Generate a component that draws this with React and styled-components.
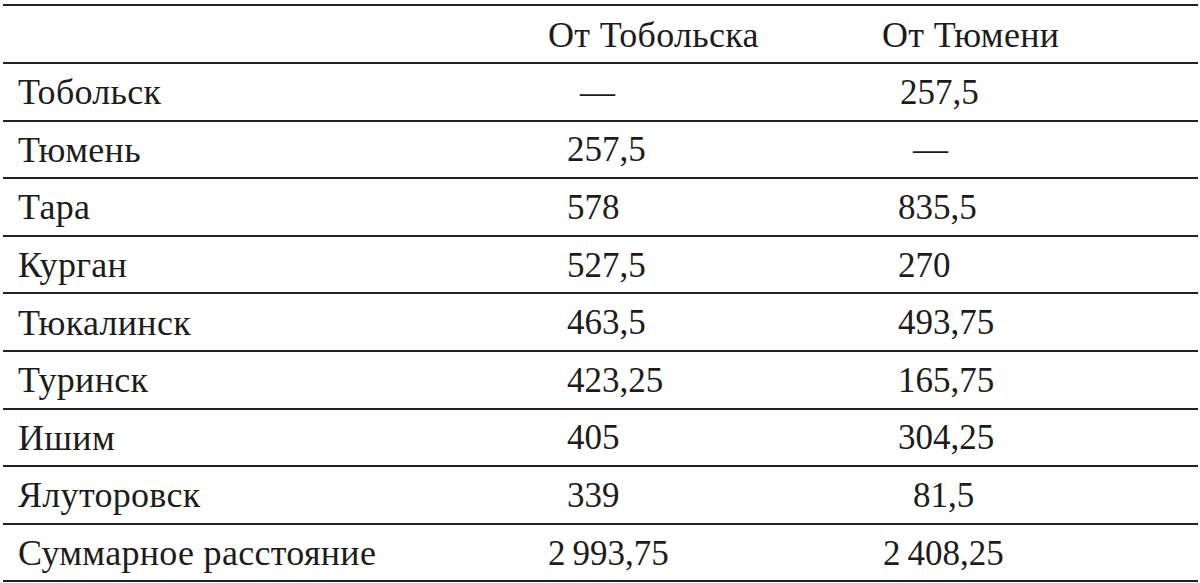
import React from 'react';
import styled, { createGlobalStyle } from 'styled-components';

const GlobalStyle = createGlobalStyle`
  html, body {
    margin: 0;
    padding: 0;
    background: #ffffff;
  }
  body {
    font-family: "Liberation Serif", "Times New Roman", serif;
    color: #1c1c1c;
  }
`;

const Table = styled.div`
  margin: 4px 0 0 3px;
  width: 1195px;
  border-bottom: 2px solid #232323;
`;

const Row = styled.div`
  display: grid;
  grid-template-columns: 545px 334px 1fr;
  align-items: center;
  box-sizing: border-box;
  height: ${(p) => (p.$head ? '58px' : '57.6px')};
  border-top: 2px solid #232323;
  padding-top: 1px;
  font-size: 35px;
  line-height: 1;
`;

const Cell = styled.div`
  padding-left: ${(p) => p.$indent || 0}px;
  white-space: nowrap;
`;

const Label = styled(Cell)`
  font-size: 36px;
  letter-spacing: 0.3px;
`;

const Name = styled(Label)`
  padding-left: 15px;
`;

const rows = [
  ['Тобольск', ['—', 32], ['257,5', 18]],
  ['Тюмень', ['257,5', 19], ['—', 31]],
  ['Тара', ['578', 19], ['835,5', 16]],
  ['Курган', ['527,5', 19], ['270', 16]],
  ['Тюкалинск', ['463,5', 19], ['493,75', 16]],
  ['Туринск', ['423,25', 19], ['165,75', 16]],
  ['Ишим', ['405', 19], ['304,25', 16]],
  ['Ялуторовск', ['339', 19], ['81,5', 31]],
  ['Суммарное расстояние', ['2\u202F993,75', 0], ['2\u202F408,25', 1]],
];

export default function App() {
  return (
    <>
      <GlobalStyle />
      <Table>
        <Row $head>
          <Cell />
          <Label>От Тобольска</Label>
          <Label>От Тюмени</Label>
        </Row>
        {rows.map(([name, a, b]) => (
          <Row key={name}>
            <Name>{name}</Name>
            <Cell $indent={a[1]}>{a[0]}</Cell>
            <Cell $indent={b[1]}>{b[0]}</Cell>
          </Row>
        ))}
      </Table>
    </>
  );
}
